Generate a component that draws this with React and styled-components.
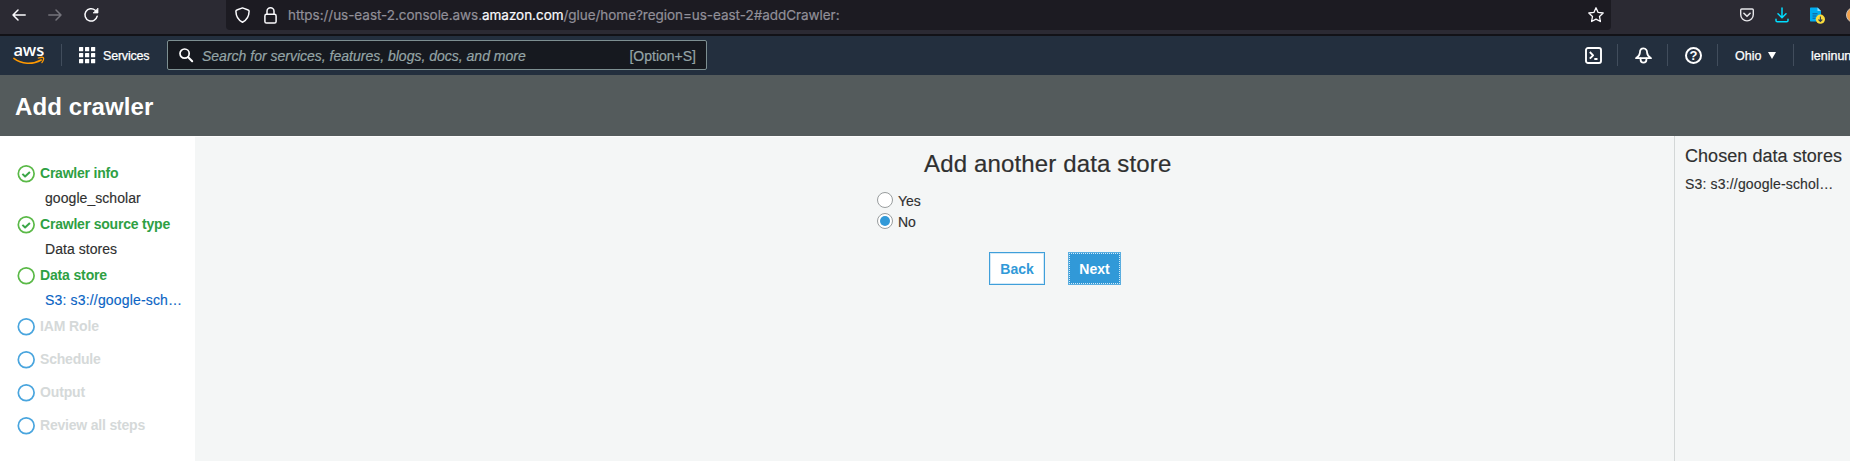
import React from "react";
import styled, { createGlobalStyle } from "styled-components";

const Global = createGlobalStyle`
  * { box-sizing: border-box; }
  html, body { margin: 0; height: 100%; overflow: hidden; background: #f4f6f6; }
  body { font-family: "Liberation Sans", Arial, sans-serif; font-size: 14px; color: #2f3030; }
  svg { display: block; flex: none; overflow: visible; }
`;

const Page = styled.div`
  display: flex;
  flex-direction: column;
  width: 1850px;
  height: 461px;
  overflow: hidden;
`;

/* Browser toolbar */
const BrowserBar = styled.div`
  display: flex;
  flex: none;
  height: 36px;
  background: #2b2a33;
  border-bottom: 2px solid #121217;
  overflow: hidden;
`;
const NavButtons = styled.div`
  display: flex;
  flex: none;
  width: 226px;
  height: 30px;
  padding-left: 12px;
  gap: 22px;
  align-items: center;
`;
const UrlBar = styled.div`
  display: flex;
  flex: none;
  align-items: center;
  width: 1385px;
  height: 30px;
  padding: 0 7px 0 9px;
  background: #1c1b22;
  border-radius: 0 0 4px 4px;
`;
const Url = styled.div`
  flex: 1;
  margin-left: 11px;
  font-family: Inter, sans-serif;
  font-size: 13.5px;
  letter-spacing: ${(p) => p.$spacing};
  color: #918f98;
  -webkit-text-stroke: 0.2px currentColor;
  white-space: nowrap;
`;
const Domain = styled.span`
  color: #fbfbfe;
`;
const LockSlot = styled.div`
  margin-left: 14px;
`;
const Extensions = styled.div`
  display: flex;
  flex: none;
  align-items: center;
  height: 30px;
  margin-left: 129px;
  gap: 21px;
`;
const Avatar = styled.div`
  flex: none;
  width: 16px;
  height: 16px;
  border-radius: 50%;
  background: #f2a14b;
  border: 1px solid #c9c3bd;
`;

/* Console navigation */
const ConsoleNav = styled.nav`
  display: flex;
  flex: none;
  align-items: center;
  height: 39px;
  padding: 0 0 1px 13px;
  background: #232f3e;
  color: #fff;
`;
const Divider = styled.div`
  flex: none;
  width: 1px;
  height: 22px;
  background: #414d5c;
`;
const Services = styled.div`
  display: flex;
  align-items: center;
  width: 105px;
  padding-left: 17px;
  gap: 8px;
`;
const NavText = styled.span`
  font-size: 12.5px;
  line-height: 16px;
  padding-top: 1px;
  letter-spacing: ${(p) => p.$spacing || "0"};
  -webkit-text-stroke: 0.25px #fff;
  white-space: nowrap;
`;
const SearchBox = styled.div`
  display: flex;
  align-items: center;
  width: 540px;
  height: 30px;
  padding: 0 10px 0 11px;
  background: #16191f;
  border: 1px solid #7d8f91;
  border-radius: 2px;
  color: #95a5a6;
`;
const Placeholder = styled.span`
  flex: 1;
  margin-left: 9px;
  padding-top: 1px;
  font-size: 14px;
  font-style: italic;
  letter-spacing: ${(p) => p.$spacing};
  -webkit-text-stroke: 0.2px #95a5a6;
`;
const Shortcut = styled.span`
  padding-top: 1px;
  font-size: 14px;
  letter-spacing: ${(p) => p.$spacing};
  -webkit-text-stroke: 0.2px #95a5a6;
`;
const NavRight = styled.div`
  display: flex;
  align-items: center;
  width: 265px;
  margin-left: auto;
  overflow: hidden;
`;
const NavCell = styled.div`
  display: flex;
  flex: none;
  align-items: center;
  gap: 7px;
  width: ${(p) => p.$width}px;
  padding-left: ${(p) => p.$pad}px;
`;

/* Page title */
const TitleBar = styled.header`
  display: flex;
  flex: none;
  align-items: center;
  height: 61px;
  padding: 2px 0 0 15px;
  background: #545b5c;
`;
const Title = styled.h1`
  margin: 0;
  font-size: 24px;
  font-weight: 700;
  line-height: 28px;
  letter-spacing: ${(p) => p.$spacing};
  color: #fff;
`;

/* Body */
const Body = styled.div`
  display: flex;
  flex: 1;
`;
const Sidebar = styled.aside`
  width: 195px;
  padding: 25px 0 0 17px;
  background: #fff;
`;
const Step = styled.div`
  display: flex;
  align-items: center;
  gap: 5px;
  height: ${(p) => (p.$pending ? 33 : 26)}px;
  padding-bottom: ${(p) => (p.$pending ? 7 : 0)}px;
  font-weight: 700;
  letter-spacing: ${(p) => p.$spacing};
  color: ${(p) => (p.$pending ? "#d5d9d9" : "#2ea043")};
  white-space: nowrap;
`;
const StepLabel = styled.span`
  padding-bottom: 2px;
`;
const StepDetail = styled.div`
  height: 25px;
  padding-left: 28px;
  line-height: 22px;
  letter-spacing: ${(p) => p.$spacing};
  color: ${(p) => (p.$link ? "#0b64c4" : "#2f3030")};
  -webkit-text-stroke: 0.15px currentColor;
  white-space: nowrap;
`;
const Main = styled.main`
  display: flex;
  flex-direction: column;
  width: 1479px;
  padding-top: 12px;
  border-top: 1px solid #fdfdfd;
  background: #f4f6f6;
`;
const Heading = styled.h2`
  margin: 0 0 0 729px;
  font-size: 24px;
  font-weight: 400;
  line-height: 29px;
  letter-spacing: ${(p) => p.$spacing};
  color: #2f3030;
  -webkit-text-stroke: 0.2px currentColor;
`;
const Options = styled.div`
  display: flex;
  flex-direction: column;
  gap: 5px;
  margin: 14px 0 0 682px;
`;
const Option = styled.label`
  display: flex;
  align-items: center;
  gap: 5px;
  height: 16px;
`;
const OptionText = styled.span`
  padding-top: 2px;
  -webkit-text-stroke: 0.15px currentColor;
`;
const Radio = styled.span`
  display: flex;
  align-items: center;
  justify-content: center;
  width: 16px;
  height: 16px;
  border: 1px solid #999d9e;
  border-radius: 50%;
  background: #fff;
  &::after {
    content: "";
    width: 10px;
    height: 10px;
    border-radius: 50%;
    background: ${(p) => (p.$checked ? "#3199d8" : "transparent")};
  }
`;
const Actions = styled.div`
  display: flex;
  gap: 23px;
  margin: 23px 0 0 794px;
`;
const Button = styled.button`
  width: ${(p) => (p.$primary ? 53 : 56)}px;
  height: 33px;
  padding: 1px 0 0;
  border: 1px solid ${(p) => (p.$primary ? "#5aaee0" : "#3f9fda")};
  box-shadow: ${(p) => (p.$primary ? "none" : "inset 0 0 0 1px #d3e9f7")};
  outline: ${(p) => (p.$primary ? "1px dotted #d3eaf8" : "none")};
  outline-offset: -2px;
  background: ${(p) => (p.$primary ? "#3199d8" : "#fff")};
  color: ${(p) => (p.$primary ? "#fff" : "#3199d8")};
  font: 700 14px "Liberation Sans", Arial, sans-serif;
`;
const Chosen = styled.aside`
  flex: 1;
  padding: 8px 0 0 10px;
  border-left: 1px solid #d3d7d7;
  background: #f4f6f6;
  white-space: nowrap;
  -webkit-text-stroke: 0.15px currentColor;
`;
const ChosenTitle = styled.div`
  font-size: 18px;
  line-height: 24px;
  letter-spacing: ${(p) => p.$spacing};
`;
const ChosenItem = styled.div`
  margin-top: 7px;
  line-height: 18px;
  letter-spacing: ${(p) => p.$spacing};
`;

const stroke = (color, width) => ({
  fill: "none", stroke: color, strokeWidth: width, strokeLinecap: "round", strokeLinejoin: "round",
});

const Arrow = ({ color, forward }) => (
  <svg width="14" height="12" viewBox="0 0 14 12" {...stroke(color, 1.5)}>
    <path d={forward ? "M0.8 6H13M8 1l5 5-5 5" : "M13.2 6H1M6 1L1 6l5 5"} />
  </svg>
);
const Reload = () => (
  <svg width="15" height="16" viewBox="0 0 15 16" {...stroke("#fbfbfe", 1.5)}>
    <path d="M13.2 9.2A6.2 6.2 0 1 1 11.2 3.2l1.3 1.3" />
    <path d="M14 1.4V6H9.4z" fill="#fbfbfe" strokeWidth="0.7" />
  </svg>
);
const Shield = () => (
  <svg width="15" height="16" viewBox="0 0 15 16" {...stroke("#fbfbfe", 1.5)}>
    <path d="M7.5 0.9L13.2 3c.6.2.9.7.9 1.3-.1 5-2.2 8.8-6.6 10.9C3.1 13.1 1 9.3.9 4.3.9 3.7 1.2 3.2 1.8 3z" />
  </svg>
);
const Lock = () => (
  <svg width="13" height="17" viewBox="0 0 13 17" {...stroke("#fbfbfe", 1.5)}>
    <rect x="0.9" y="7.3" width="11.2" height="8.7" rx="1.6" />
    <path d="M3 7.3V4.3a3.5 3.5 0 0 1 7 0v3" />
  </svg>
);
const Star = () => (
  <svg width="16" height="16" viewBox="0 0 16 16" {...stroke("#fbfbfe", 1.3)}>
    <path d="M8 .8l2.1 4.6 5.1.6-3.7 3.4.9 5.1L8 12.1l-4.4 2.4.9-5.1L.8 6l5.1-.6z" />
  </svg>
);
const Pocket = () => (
  <svg width="14" height="14" viewBox="0 0 14 14" {...stroke("#e6e6ea", 1.4)}>
    <path d="M1.8 1h10.4c.6 0 1.1.5 1.1 1.1V6.6a6.3 6.3 0 0 1-12.6 0V2.1C.7 1.5 1.2 1 1.8 1z" />
    <path d="M3.9 5.3L7 8.3l3.1-3" strokeWidth="1.6" />
  </svg>
);
const Download = () => (
  <svg width="14" height="16" viewBox="0 0 14 16" {...stroke("#00ddff", 1.5)}>
    <path d="M7 1v9.5M3 6.8l4 4 4-4M1 12.2v1.3c0 .8.5 1.3 1.3 1.3h9.4c.8 0 1.3-.5 1.3-1.3v-1.3" />
  </svg>
);
const FileDownload = () => (
  <svg width="15" height="17" viewBox="0 0 15 17">
    <path d="M1 .5h6.5L11 4v10.5H1c-.6 0-1-.4-1-1v-12c0-.6.4-1 1-1z" fill="#00adf0" />
    <path d="M7.5.5V4H11z" fill="#8be0ff" />
    <path d="M2.5 6.8h5M2.5 9h4M2.5 11.2h3" stroke="#165b91" strokeWidth="1" />
    <circle cx="10.4" cy="12.2" r="4.6" fill="#fbdc3c" />
    <path d="M10.4 9.6v4.6M8.5 12.5l1.9 1.9 1.9-1.9" fill="none" stroke="#34404a" strokeWidth="1.1" />
  </svg>
);

const LogoWrap = styled.div`
  display: flex;
  flex-direction: column;
  width: 48px;
  height: 22px;
`;
const LogoWord = styled.span`
  height: 13px;
  margin-left: 0.5px;
  font-family: "Open Sans", sans-serif;
  font-size: 16.5px;
  font-weight: 600;
  line-height: 11px;
  letter-spacing: ${(p) => p.$spacing};
`;
const Logo = () => (
  <LogoWrap>
    <LogoWord $spacing="-0.2px">aws</LogoWord>
    <svg width="32" height="8" viewBox="0 0 32 8" fill="none" stroke="#ff9900" strokeWidth="1.6" strokeLinecap="round">
      <path d="M.9 1.4C8.5 7.3 19.5 7.9 28.2 3" />
      <path d="M25.3 1c2-.7 4.6-.8 5.2-.2.5.7-.2 3.2-1.6 4.8" strokeWidth="1.3" />
    </svg>
  </LogoWrap>
);
const AppGrid = () => (
  <svg width="16" height="16" viewBox="0 0 16 16" fill="#fff">
    {[0, 6, 12].map((y) => [0, 6, 12].map((x) => (
      <rect key={`${x}-${y}`} x={x} y={y} width="4.2" height="4.2" rx="0.5" />
    )))}
  </svg>
);
const Search = () => (
  <svg width="14" height="14" viewBox="0 0 14 14" {...stroke("#fff", 1.7)}>
    <circle cx="5.6" cy="5.6" r="4.6" />
    <path d="M9.2 9.2l4 4" strokeWidth="2" />
  </svg>
);
const Shell = () => (
  <svg width="17" height="17" viewBox="0 0 17 17" {...stroke("#fff", 1.9)}>
    <rect x="1" y="1" width="15" height="15" rx="2" />
    <path d="M4.8 5l3.3 3.3-3.3 3.3M9.3 12h3.2" strokeLinecap="butt" />
  </svg>
);
const Bell = () => (
  <svg width="17" height="17" viewBox="0 0 17 17" {...stroke("#fff", 1.8)}>
    <path d="M8.5 1.4c-2.5 0-3.6 2-3.6 4.3 0 2.4-1.3 3.7-3.9 5.5h15c-2.600-1.800-3.900-3.100-3.900-5.500 0-2.300-1.100-4.300-3.600-4.300z" />
    <path d="M5.6 11.5v1.3c0 1.7 1.2 2.9 2.9 2.9s2.9-1.2 2.9-2.9v-1.3" />
  </svg>
);
const HelpWrap = styled.span`
  display: flex;
  align-items: center;
  justify-content: center;
  width: 17px;
  height: 17px;
  border: 2px solid #fff;
  border-radius: 50%;
  font-size: 13px;
  font-weight: 700;
  line-height: 13px;
`;
const Caret = () => (
  <svg width="8" height="7" viewBox="0 0 8 7"><path d="M0 0h8L4 7z" fill="#fff" /></svg>
);
const StepMark = ({ color, done }) => (
  <svg width="18" height="18" viewBox="0 0 18 18" {...stroke(color, 1.7)}>
    <circle cx="9.2" cy="8.8" r="7.9" />
    {done && <path d="M5.4 8.9l2.7 2.6 4.8-4.5" strokeWidth="2" strokeLinecap="butt" stroke="#3ba648" />}
  </svg>
);

const steps = [
  { label: "Crawler info", detail: "google_scholar", done: true, ls: "-0.22px", dls: "0.06px" },
  { label: "Crawler source type", detail: "Data stores", done: true, ls: "-0.2px", dls: "0.04px" },
  { label: "Data store", detail: "S3: s3://google-sch…", link: true, ls: "-0.15px", dls: "0.17px" },
  { label: "IAM Role", pending: true, ls: "-0.12px" },
  { label: "Schedule", pending: true, ls: "-0.2px" },
  { label: "Output", pending: true, ls: "-0.15px" },
  { label: "Review all steps", pending: true, ls: "-0.2px" },
];

export default function App() {
  return (
    <Page>
      <Global />
      <BrowserBar>
        <NavButtons>
          <Arrow color="#fbfbfe" />
          <Arrow color="#75747c" forward />
          <Reload />
        </NavButtons>
        <UrlBar>
          <Shield />
          <LockSlot><Lock /></LockSlot>
          <Url $spacing="-0.04px">https://us-east-2.console.aws.<Domain>amazon.com</Domain>/glue/home?region=us-east-2#addCrawler:</Url>
          <Star />
        </UrlBar>
        <Extensions>
          <Pocket /><Download /><FileDownload /><Avatar />
        </Extensions>
      </BrowserBar>
      <ConsoleNav>
        <Logo />
        <Divider />
        <Services><AppGrid /><NavText $spacing="-0.2px">Services</NavText></Services>
        <SearchBox>
          <Search />
          <Placeholder $spacing="0px">Search for services, features, blogs, docs, and more</Placeholder>
          <Shortcut $spacing="0px">[Option+S]</Shortcut>
        </SearchBox>
        <NavRight>
          <NavCell $width={32} $pad={0}><Shell /></NavCell>
          <Divider />
          <NavCell $width={49} $pad={17}><Bell /></NavCell>
          <Divider />
          <NavCell $width={49} $pad={17}><HelpWrap>?</HelpWrap></NavCell>
          <Divider />
          <NavCell $width={75} $pad={17}><NavText>Ohio</NavText><Caret /></NavCell>
          <Divider />
          <NavCell $width={80} $pad={17}><NavText>leninun</NavText></NavCell>
        </NavRight>
      </ConsoleNav>
      <TitleBar><Title $spacing="0.1px">Add crawler</Title></TitleBar>
      <Body>
        <Sidebar>
          {steps.map((s) => (
            <React.Fragment key={s.label}>
              <Step $pending={s.pending} $spacing={s.ls}>
                <StepMark color={s.pending ? "#49a5de" : "#5ab947"} done={s.done} />
                <StepLabel>{s.label}</StepLabel>
              </Step>
              {s.detail && <StepDetail $link={s.link} $spacing={s.dls}>{s.detail}</StepDetail>}
            </React.Fragment>
          ))}
        </Sidebar>
        <Main>
          <Heading $spacing="0.15px">Add another data store</Heading>
          <Options>
            <Option><Radio /><OptionText>Yes</OptionText></Option>
            <Option><Radio $checked /><OptionText>No</OptionText></Option>
          </Options>
          <Actions>
            <Button>Back</Button>
            <Button $primary>Next</Button>
          </Actions>
        </Main>
        <Chosen>
          <ChosenTitle $spacing="0.05px">Chosen data stores</ChosenTitle>
          <ChosenItem $spacing="0.17px">S3: s3://google-schol…</ChosenItem>
        </Chosen>
      </Body>
    </Page>
  );
}
